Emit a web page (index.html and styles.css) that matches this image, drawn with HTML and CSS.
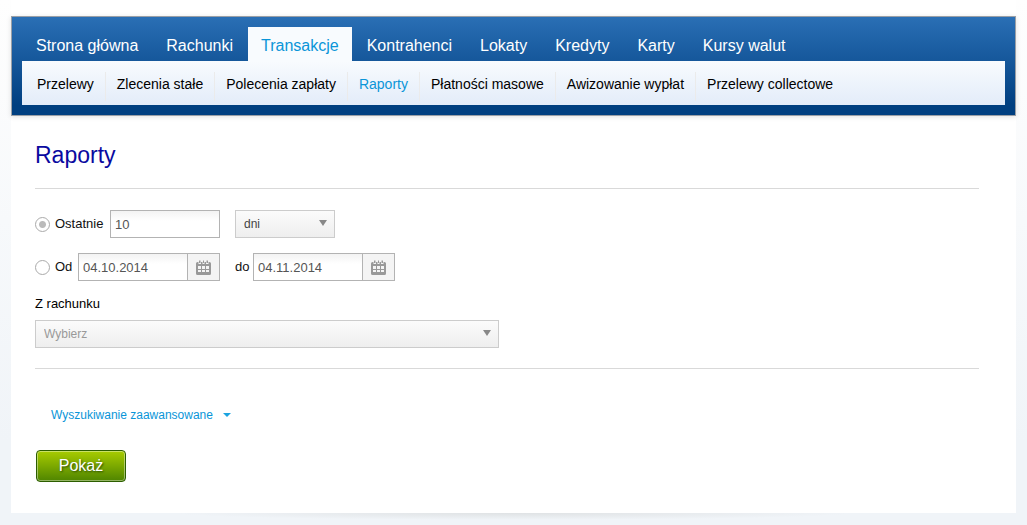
FILE: index.html
```html
<!DOCTYPE html>
<html lang="pl">
<head>
<meta charset="utf-8">
<title>Raporty</title>
<link rel="stylesheet" href="styles.css">
</head>
<body>
<svg class="defs" aria-hidden="true">
  <symbol id="calendar" viewBox="0 0 15 15">
    <path fill="#999" fill-rule="evenodd" d="M0 3.500Q0 2 1.500 2H2.500V4H5V2H6.500V4H8.500V2H10V4H12.500V2H13.500Q15 2 15 3.500V13.500Q15 15 13.500 15H1.500Q0 15 0 13.500ZM2 6V9H5V6ZM6 6V9H9V6ZM10 6V9H13V6ZM2 10V12H5V10ZM6 10V12H9V10ZM10 10V12H13V10Z"/>
    <path fill="#999" d="M3 0.500H4.500V3H3ZM7 0.500H8V3H7ZM10.500 0.500H12V3H10.500Z"/>
  </symbol>
</svg>
<div class="page">
  <header class="header">
    <nav class="tabs" aria-label="Menu">
      <a class="tab" href="#">Strona główna</a>
      <a class="tab" href="#">Rachunki</a>
      <a class="tab tab-active" href="#">Transakcje</a>
      <a class="tab" href="#">Kontrahenci</a>
      <a class="tab" href="#">Lokaty</a>
      <a class="tab" href="#">Kredyty</a>
      <a class="tab" href="#">Karty</a>
      <a class="tab" href="#">Kursy walut</a>
    </nav>
    <nav class="subnav" aria-label="Transakcje">
      <a class="sub" href="#">Przelewy</a>
      <a class="sub" href="#">Zlecenia stałe</a>
      <a class="sub" href="#">Polecenia zapłaty</a>
      <a class="sub sub-active" href="#">Raporty</a>
      <a class="sub" href="#">Płatności masowe</a>
      <a class="sub" href="#">Awizowanie wypłat</a>
      <a class="sub" href="#">Przelewy collectowe</a>
    </nav>
  </header>
  <main class="content">
    <h1 class="title">Raporty</h1>
    <form class="form">
      <div class="filters">
        <div class="row">
          <div class="cell">
            <input class="radio" type="radio" name="range" id="range-last" checked>
            <label class="label" for="range-last">Ostatnie</label>
            <input class="text" type="text" value="10" aria-label="Liczba">
          </div>
          <div class="select-wrap select-unit">
            <select class="select" aria-label="Jednostka"><option>dni</option></select>
          </div>
        </div>
        <div class="row">
          <div class="cell">
            <input class="radio" type="radio" name="range" id="range-dates">
            <label class="label" for="range-dates">Od</label>
            <div class="date">
              <input class="text" type="text" value="04.10.2014" aria-label="Data od">
              <button class="pick" type="button" aria-label="Kalendarz"><svg class="icon"><use href="#calendar"/></svg></button>
            </div>
          </div>
          <div class="cell cell-to">
            <label for="date-to">do</label>
            <div class="date">
              <input class="text" type="text" id="date-to" value="04.11.2014">
              <button class="pick" type="button" aria-label="Kalendarz"><svg class="icon"><use href="#calendar"/></svg></button>
            </div>
          </div>
        </div>
        <div class="account">
          <label class="account-label" for="account">Z rachunku</label>
          <div class="select-wrap">
            <select class="select select-empty" id="account"><option>Wybierz</option></select>
          </div>
        </div>
      </div>
      <a class="advanced" href="#">Wyszukiwanie zaawansowane</a>
      <button class="submit" type="submit">Pokaż</button>
    </form>
  </main>
</div>
</body>
</html>
```
FILE: styles.css
```css
* { box-sizing: border-box; }
html { background: #f0f4f8; }
body {
  margin: 0;
  padding: 0 11px 12px;
  font-family: "Liberation Sans", Arial, sans-serif;
  font-size: 13px;
  line-height: 16px;
  color: #111;
  background: linear-gradient(#fefefe, #f0f4f8 84%);
}
a { text-decoration: none; }
input, select, button { font-family: inherit; margin: 0; }
.defs { display: none; }

.page {
  position: relative;
  padding: 16px 0 31px;
  background: #fff;
}
/* soft shadow under the sheet */
.page::after {
  content: "";
  position: absolute;
  top: 100%;
  left: 16%;
  right: 16%;
  height: 7px;
  background: radial-gradient(ellipse at top, #dfe2e4, rgba(240, 244, 248, 0) 70%);
}

.header {
  padding: 10px 10px;
  border: 1px solid #9a9fa6;
  background: linear-gradient(#2a6fb5, #003f80 90%);
  box-shadow: 0 1px 5px rgba(0, 0, 0, 0.12);
}
.tabs { display: flex; gap: 2px; padding-left: 1px; }
.tab {
  padding: 10px 13px 6px;
  font-size: 16px;
  line-height: 18px;
  color: #fff;
}
.tab-active { color: #0a95d8; background: #f8fbfe; }
.subnav {
  display: flex;
  height: 44px;
  padding: 11px 4px 4px;
  background: linear-gradient(#f8fbfe, #e3ecf9);
}
.sub {
  padding: 3px 11px 0;
  font-size: 14px;
  line-height: 18px;
  color: #000;
  border-right: 1px solid #ebebeb;
}
.sub:last-child { border: 0; }
.sub-active { color: #0a95d8; }

.content { padding: 23px 37px 0 24px; }
.title {
  margin: 0;
  padding-bottom: 17px;
  border-bottom: 1px solid #d9d9d9;
  font-size: 23px;
  font-weight: normal;
  line-height: 32px;
  color: #0a0aa0;
}
.filters {
  padding: 21px 0 20px;
  border-bottom: 1px solid #d9d9d9;
}
.row { display: flex; gap: 15px; margin-bottom: 15px; }
.cell {
  display: flex;
  align-items: center;
  justify-content: space-between;
  width: 185px;
}
.cell-to { width: 160px; }
.label { flex: 1; padding-left: 5px; }
.radio {
  appearance: none;
  width: 15px;
  height: 15px;
  border: 1px solid #aaa;
  border-radius: 50%;
  background: #fff;
}
.radio:checked { background: radial-gradient(circle, #bbb 3px, #fff 4px); }
.text {
  width: 110px;
  height: 28px;
  padding: 0 4px;
  border: 1px solid #b3b3b3;
  font-size: 13px;
  color: #555;
  background: linear-gradient(#f3f3f3, #fff 10px);
}
.date { display: flex; }
.pick {
  display: flex;
  align-items: center;
  justify-content: center;
  width: 32px;
  height: 28px;
  padding: 0;
  border: 1px solid #b3b3b3;
  border-left: 0;
  background: #f4f4f4;
}
.icon { width: 15px; height: 15px; }
.select-wrap { position: relative; }
.select-wrap::after {
  content: "";
  position: absolute;
  top: 10px;
  right: 8px;
  border: solid transparent;
  border-width: 6px 4px 0;
  border-top-color: #888;
  pointer-events: none;
}
.select-unit { width: 100px; }
.select {
  appearance: none;
  display: block;
  width: 100%;
  height: 28px;
  padding: 0 8px;
  border: 1px solid #ccc;
  border-radius: 0;
  font-size: 12px;
  color: #444;
  background: linear-gradient(#fbfbfb, #eee);
}
.select-empty { color: #999; }
.account { max-width: 464px; }
.account-label { display: block; margin-bottom: 8px; color: #000; }

.advanced {
  display: flex;
  align-items: center;
  gap: 10px;
  width: fit-content;
  margin: 38px 0 27px 16px;
  font-size: 12px;
  color: #0a95d8;
}
.advanced::after {
  content: "";
  border: solid transparent;
  border-width: 4px 4px 0;
  border-top-color: #1aa3e0;
}
.submit {
  display: block;
  min-width: 90px;
  height: 32px;
  margin-left: 1px;
  border: 1px solid #2c5e00;
  border-radius: 4px;
  font-size: 16px;
  color: #fff;
  text-shadow: 1px 1px 2px #2c5000;
  background: linear-gradient(#a8cc00, #4f8500);
  box-shadow: inset 0 0 0 1px rgba(255, 255, 255, 0.4);
}
```
